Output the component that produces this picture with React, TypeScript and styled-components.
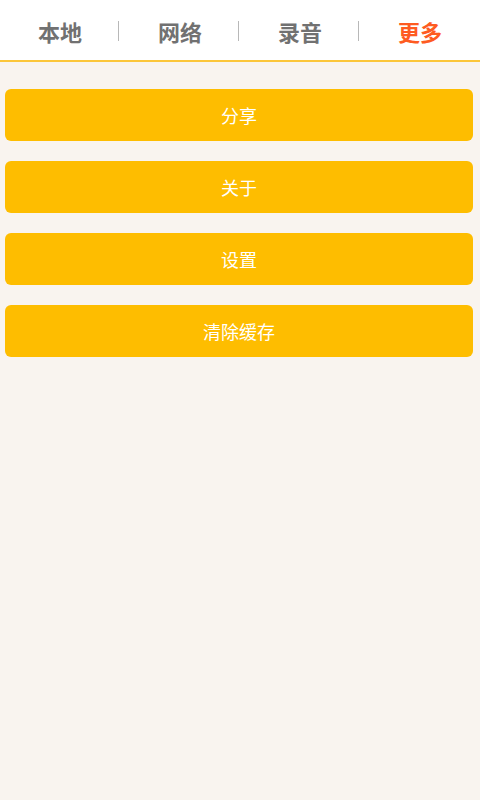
import React, { useState } from "react";
import styled, { createGlobalStyle } from "styled-components";

const GlobalStyle = createGlobalStyle`
    html, body {
        margin: 0;
        padding: 0;
        background: #f9f4ef;
        font-family: "Noto Sans CJK SC", "Noto Sans", sans-serif;
    }
`;

const Page = styled.div`
    width: 480px;
    min-height: 800px;
    background: #f9f4ef;
`;

const TabBar = styled.nav`
    display: flex;
    height: 60px;
    background: #ffffff;
    border-bottom: 2px solid #fcc63a;
`;

const Tab = styled.div<{ $active: boolean; $divider: boolean }>`
    position: relative;
    flex: 1;
    display: flex;
    align-items: center;
    justify-content: center;
    font-size: 22px;
    font-weight: 700;
    padding-top: 1px;
    color: ${(p) => (p.$active ? "#fe5b21" : "#717171")};

    &::after {
        content: "";
        display: ${(p) => (p.$divider ? "block" : "none")};
        position: absolute;
        right: 1px;
        top: 21px;
        width: 1px;
        height: 20px;
        background: #b8b8b8;
    }
`;

const List = styled.div`
    display: flex;
    flex-direction: column;
    gap: 20px;
    padding: 27px 7px 0 5px;
`;

const Button = styled.button`
    height: 52px;
    border: none;
    border-radius: 6px;
    background: #febd00;
    color: #ffffff;
    font-family: "Noto Sans CJK SC", "Noto Sans", sans-serif;
    font-size: 18px;
    font-weight: 400;
    display: flex;
    align-items: center;
    justify-content: center;
    padding: 0;
`;

const tabs = ["本地", "网络", "录音", "更多"];
const actions = ["分享", "关于", "设置", "清除缓存"];

function App() {
    const [active, setActive] = useState<number>(3);

    return (
        <Page>
            <GlobalStyle />
            <TabBar>
                {tabs.map((t, i) => (
                    <Tab
                        key={t}
                        $active={i === active}
                        $divider={i < tabs.length - 1}
                        onClick={() => setActive(i)}
                    >
                        {t}
                    </Tab>
                ))}
            </TabBar>
            <List>
                {actions.map((a) => (
                    <Button key={a}>{a}</Button>
                ))}
            </List>
        </Page>
    );
}

export default App;
